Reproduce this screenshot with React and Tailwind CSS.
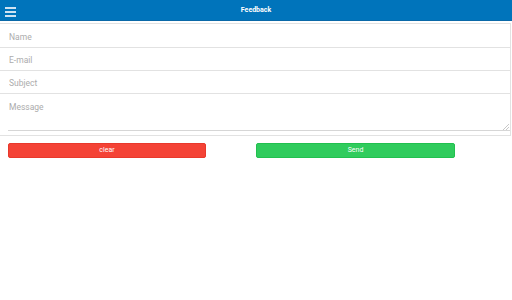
import React from "react";

const App = () => {
  return (
    <div className="w-[512px] h-[300px] bg-white" style={{ fontFamily: "Roboto, 'Liberation Sans', sans-serif" }}>
      <div className="h-[21px] bg-[#0074bb] relative flex items-center justify-center border-b border-[#0a69a8]">
        <div className="absolute left-[5px] top-[7px] flex flex-col gap-[2px]">
          <span className="block w-[11px] h-[2px] bg-[#cfe3f2]" />
          <span className="block w-[11px] h-[2px] bg-[#cfe3f2]" />
          <span className="block w-[11px] h-[2px] bg-[#cfe3f2]" />
        </div>
        <span className="text-white text-[7px] font-bold">Feedback</span>
      </div>
      <div className="mt-[2px] border border-[#e2e2e2] border-l-0 mr-[1px] pb-[4px]">
        <input
          className="block w-full h-[24px] px-[9px] pt-[2px] text-[8.5px] border-b border-[#e2e2e2] outline-none placeholder:text-[#acacac]"
          placeholder="Name"
        />
        <input
          className="block w-full h-[23px] px-[9px] pt-[2px] text-[8.5px] border-b border-[#e2e2e2] outline-none placeholder:text-[#acacac]"
          placeholder="E-mail"
        />
        <input
          className="block w-full h-[23px] px-[9px] pt-[2px] text-[8.5px] border-b border-[#e2e2e2] outline-none placeholder:text-[#acacac]"
          placeholder="Subject"
        />
        <div className="pl-[8px] relative">
          <textarea
            className="block w-full h-[37px] pt-[7px] pl-[1px] text-[8.5px] border-b border-[#d6d6d6] outline-none resize-none placeholder:text-[#acacac]"
            placeholder="Message"
          />
          <svg className="absolute right-[1px] bottom-[1px]" width="6" height="6" viewBox="0 0 6 6">
            <path d="M6 0 L0 6 M6 3 L3 6" stroke="#c8c8c8" strokeWidth="1" />
          </svg>
        </div>
      </div>
      <div className="flex px-[8px] mt-[7px] gap-[50px]">
        <button className="w-[198px] h-[15px] bg-[#f44336] border border-[#e8392c] rounded-[2px] text-white text-[7px]">
          clear
        </button>
        <button className="w-[199px] h-[15px] bg-[#30cc5d] border border-[#22c04f] rounded-[2px] text-white text-[7px]">
          Send
        </button>
      </div>
    </div>
  );
};

export default App;
